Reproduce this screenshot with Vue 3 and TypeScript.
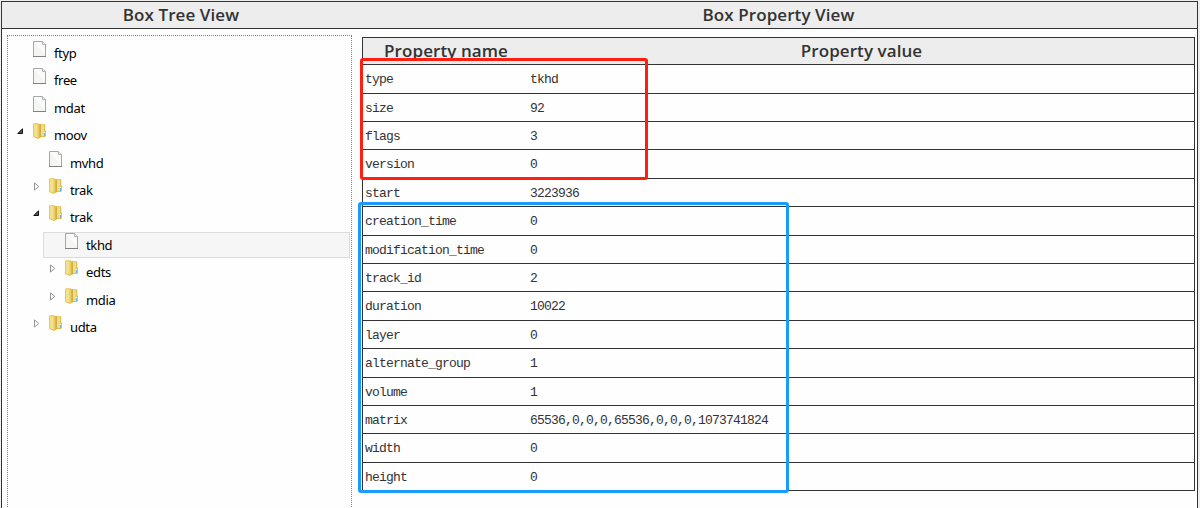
<script setup lang="ts">
interface TreeNode {
  label: string
  depth: number
  kind: 'file' | 'folder'
  open?: boolean
  selected?: boolean
}

interface Property {
  name: string
  value: string
}

const nodes: TreeNode[] = [
  { label: 'ftyp', depth: 0, kind: 'file' },
  { label: 'free', depth: 0, kind: 'file' },
  { label: 'mdat', depth: 0, kind: 'file' },
  { label: 'moov', depth: 0, kind: 'folder', open: true },
  { label: 'mvhd', depth: 1, kind: 'file' },
  { label: 'trak', depth: 1, kind: 'folder' },
  { label: 'trak', depth: 1, kind: 'folder', open: true },
  { label: 'tkhd', depth: 2, kind: 'file', selected: true },
  { label: 'edts', depth: 2, kind: 'folder' },
  { label: 'mdia', depth: 2, kind: 'folder' },
  { label: 'udta', depth: 1, kind: 'folder' },
]

const properties: Property[] = [
  { name: 'type', value: 'tkhd' },
  { name: 'size', value: '92' },
  { name: 'flags', value: '3' },
  { name: 'version', value: '0' },
  { name: 'start', value: '3223936' },
  { name: 'creation_time', value: '0' },
  { name: 'modification_time', value: '0' },
  { name: 'track_id', value: '2' },
  { name: 'duration', value: '10022' },
  { name: 'layer', value: '0' },
  { name: 'alternate_group', value: '1' },
  { name: 'volume', value: '1' },
  { name: 'matrix', value: '65536,0,0,0,65536,0,0,0,1073741824' },
  { name: 'width', value: '0' },
  { name: 'height', value: '0' },
]
</script>

<template>
  <div class="page">
    <div class="frame">
      <header class="titles">
        <h2 class="tree-title"><span>Box Tree View</span></h2>
        <h2 class="prop-title"><span>Box Property View</span></h2>
      </header>
      <div class="body">
        <ul class="tree">
          <li v-for="(node, i) in nodes" :key="i" class="node" :class="['depth-' + node.depth, { selected: node.selected }]">
            <span class="toggle">
              <svg v-if="node.kind === 'folder' && node.open" width="7" height="7" viewBox="0 0 7 7">
                <path d="M5.5 .8V5.5H.8Z" fill="#555" stroke="#111" />
              </svg>
              <svg v-else-if="node.kind === 'folder'" class="closed" width="6" height="9" viewBox="0 0 6 9">
                <path d="M.5 .9V8.1L4.8 4.5Z" fill="#fff" stroke="#969696" />
              </svg>
            </span>
            <svg v-if="node.kind === 'file'" class="icon" width="13" height="16" viewBox="0 0 13 16">
              <path d="M.5 .5H9.5L12.5 3.5V15.5H.5Z" fill="#f4f6f1" stroke="#a6a6a6" />
              <path d="M1 1H9V4H12V14Z" fill="#fbfcfa" />
              <path d="M9.5 .5V3.5H12.5" fill="#eee" stroke="#b0b0b0" />
              <path d="M0 15.5H13" stroke="#808080" />
            </svg>
            <svg v-else class="icon" width="13" height="16" viewBox="0 0 13 16">
              <path d="M5 1H11.5L12.3 2V7L13 8V13L12 14H5Z" fill="#dfc052" />
              <path d="M8 1.5H11V13H8Z" fill="#f1dc83" />
              <path d="M0 1.5L1 .3H5.5L7.5 2V14.5L5 16L0 14Z" fill="#e3c254" />
              <path d="M.8 1.2H4.6V14.6L.8 13.4Z" fill="#f5e18d" />
              <path d="M5 1.6V15.4" stroke="#edd577" />
              <path d="M7.2 2V14.4" stroke="#c7a439" />
              <path d="M11 9H12V13H11Z" fill="#fdf8d8" />
              <path d="M11.5 10V13" stroke="#68bce0" />
            </svg>
            <span class="label">{{ node.label }}</span>
          </li>
        </ul>
        <section class="props">
          <div class="prop-head">
            <span class="name-head">Property name</span>
            <span class="value-head">Property value</span>
          </div>
          <div class="rows">
            <div v-for="p in properties" :key="p.name" class="row">
              <span class="name">{{ p.name }}</span>
              <span class="value">{{ p.value }}</span>
            </div>
          </div>
        </section>
      </div>
    </div>
    <div class="mark red"></div>
    <div class="mark blue"></div>
  </div>
</template>

<style>
body {
  margin: 0;
  overflow: hidden;
}
</style>

<style scoped>
.page {
  position: relative;
  box-sizing: border-box;
  width: 1200px;
  height: 508px;
  padding: 1px 2px 0 1px;
  background: #eee;
  overflow: hidden;
}
.frame {
  box-sizing: border-box;
  height: 507px;
  border: 1px solid #333;
  border-bottom: 0;
  background: #fefefe;
}
.titles {
  display: flex;
  height: 26px;
  border-bottom: 1px solid #333;
  background: #ededed;
}
h2,
.prop-head {
  margin: 0;
  color: #333;
  font: 600 17px/26px "Open Sans", "Noto Sans", sans-serif;
  letter-spacing: 0.08px;
  text-align: center;
  white-space: nowrap;
}
.tree-title {
  width: 358px;
}
.prop-title {
  width: 837px;
}
.body {
  display: flex;
  align-items: flex-start;
}
.tree {
  box-sizing: border-box;
  width: 345px;
  height: 480px;
  margin: 6px 10px 0 5px;
  padding: 4px 1px 0 5px;
  border: 1px dotted #808080;
  border-bottom: 0;
  list-style: none;
}
.node {
  box-sizing: border-box;
  display: flex;
  align-items: flex-start;
  height: 26px;
  margin-bottom: 1.4px;
  border: 1px solid transparent;
}
.depth-0 {
  margin-left: -2px;
}
.depth-1 {
  margin-left: 14px;
}
.depth-2 {
  margin-left: 30px;
}
.selected {
  border-color: #dcdcdc;
  background: #f6f6f6;
}
.toggle {
  display: flex;
  width: 21px;
  padding-top: 5px;
}
.toggle svg {
  margin-left: 5px;
}
.toggle .closed {
  margin: -1px 0 0 6px;
}
.icon {
  flex: none;
}
.label {
  margin: 1px 0 0 8px;
  color: #000;
  font: 13px/22px "Noto Sans", "Open Sans", sans-serif;
  letter-spacing: -0.35px;
}
.props {
  box-sizing: border-box;
  width: 833px;
  margin-top: 8px;
  border: 1px solid #333;
  border-bottom: 0;
}
.prop-head {
  display: flex;
  height: 26px;
  border-bottom: 1px solid #333;
  background: #ededed;
}
.name-head {
  width: 166px;
}
.value-head {
  width: 665px;
}
.row {
  box-sizing: border-box;
  display: flex;
  height: 28px;
  border-bottom: 1px solid #333;
  color: #333;
  font: 13px/30px "Liberation Mono", monospace;
  letter-spacing: -0.8px;
}
.row:nth-child(5n + 1),
.row:nth-child(5n + 4) {
  height: 29px;
}
.name {
  width: 165px;
  padding-left: 2px;
}
.mark {
  position: absolute;
  box-sizing: border-box;
  border: 3px solid;
  border-radius: 3px;
}
.red {
  left: 360px;
  top: 58px;
  width: 288px;
  height: 122px;
  border-color: #ff1f12;
}
.blue {
  left: 358px;
  top: 202px;
  width: 431px;
  height: 291px;
  border-color: #1c9bff;
}
</style>
